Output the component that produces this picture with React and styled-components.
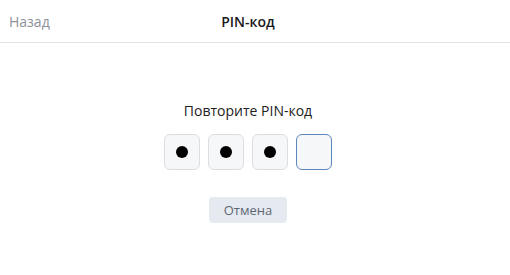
import React from "react";
import styled, { createGlobalStyle } from "styled-components";

const GlobalStyle = createGlobalStyle`
  html, body {
    margin: 0;
    padding: 0;
    background: #ffffff;
    font-family: "Open Sans", "Noto Sans", sans-serif;
  }
`;

const Header = styled.div`
  height: 42px;
  display: grid;
  grid-template-columns: 1fr auto 1fr;
  align-items: center;
  padding: 0 23px 0 9px;
  border-bottom: 1px solid #e3e3e3;
`;

const Back = styled.button`
  justify-self: start;
  border: none;
  background: none;
  padding: 0;
  font-family: inherit;
  font-size: 14px;
  color: #8c919a;
  cursor: pointer;
`;

const Title = styled.div`
  font-size: 14px;
  font-weight: 600;
  color: #1a1a1a;
`;

const Content = styled.div`
  display: flex;
  flex-direction: column;
  align-items: center;
  padding: 58px 14px 0 0;
`;

const Prompt = styled.div`
  font-size: 14px;
  color: #222;
  line-height: 20px;
`;

const Cells = styled.div`
  display: flex;
  gap: 8px;
  margin-top: 13px;
`;

const Cell = styled.div`
  width: 36px;
  height: 36px;
  box-sizing: border-box;
  border-radius: 6px;
  background: #f6f7f9;
  border: 1px solid ${(p) => (p.$active ? "#5c87bd" : "#dcdde0")};
  display: flex;
  align-items: center;
  justify-content: center;
`;

const Dot = styled.span`
  width: 12px;
  height: 12px;
  border-radius: 50%;
  background: #000;
`;

const Cancel = styled.button`
  margin-top: 27px;
  width: 78px;
  height: 26px;
  border: none;
  border-radius: 4px;
  background: #e5e9f0;
  color: #5e6674;
  font-family: inherit;
  font-size: 13px;
  cursor: pointer;
`;

export default function App() {
  const filled = 3;
  return (
    <>
      <GlobalStyle />
      <Header>
        <Back>Назад</Back>
        <Title>PIN-код</Title>
        <span />
      </Header>
      <Content>
        <Prompt>Повторите PIN-код</Prompt>
        <Cells>
          {[0, 1, 2, 3].map((i) => (
            <Cell key={i} $active={i === filled}>
              {i < filled && <Dot />}
            </Cell>
          ))}
        </Cells>
        <Cancel>Отмена</Cancel>
      </Content>
    </>
  );
}
